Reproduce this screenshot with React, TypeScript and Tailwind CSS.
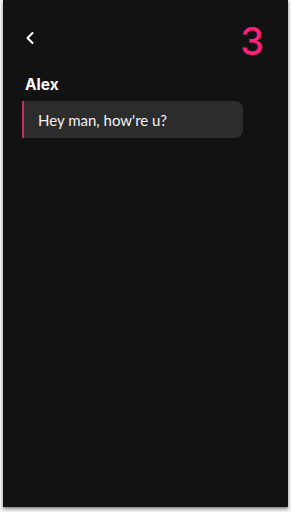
import { ChevronLeft } from "lucide-react";

export default function App() {
  return (
    <div className="h-[512px] w-[291px] bg-[#f4f4f4] px-[3px] pb-[5px]" style={{ fontFamily: "Lato, 'Noto Sans', sans-serif" }}>
      <div className="flex h-full flex-col bg-[#121212] shadow-[0_2px_3px_rgba(0,0,0,0.45)]">
        <div className="flex items-start justify-between pl-[17px] pr-[24px] pt-[22px]">
          <ChevronLeft className="mt-[6px] h-[20px] w-[20px] text-white" strokeWidth={2.5} />
          <span className="text-[38px] leading-[38px] font-medium text-[#ff1f7a]" style={{ fontFamily: "Inter, sans-serif" }}>3</span>
        </div>
        <div className="mt-[13px] pl-[22px] text-[15.5px] font-bold text-white" style={{ fontFamily: "Inter, sans-serif" }}>Alex</div>
        <div className="ml-[19px] mt-[5px] flex h-[37px] w-[221px] items-center rounded-r-[8px] border-l-2 border-[#e0206e] bg-[#2c2c2c] pl-[14px]">
          <span className="text-[15px] text-[#f2f2f2]">Hey man, how're u?</span>
        </div>
      </div>
    </div>
  );
}
